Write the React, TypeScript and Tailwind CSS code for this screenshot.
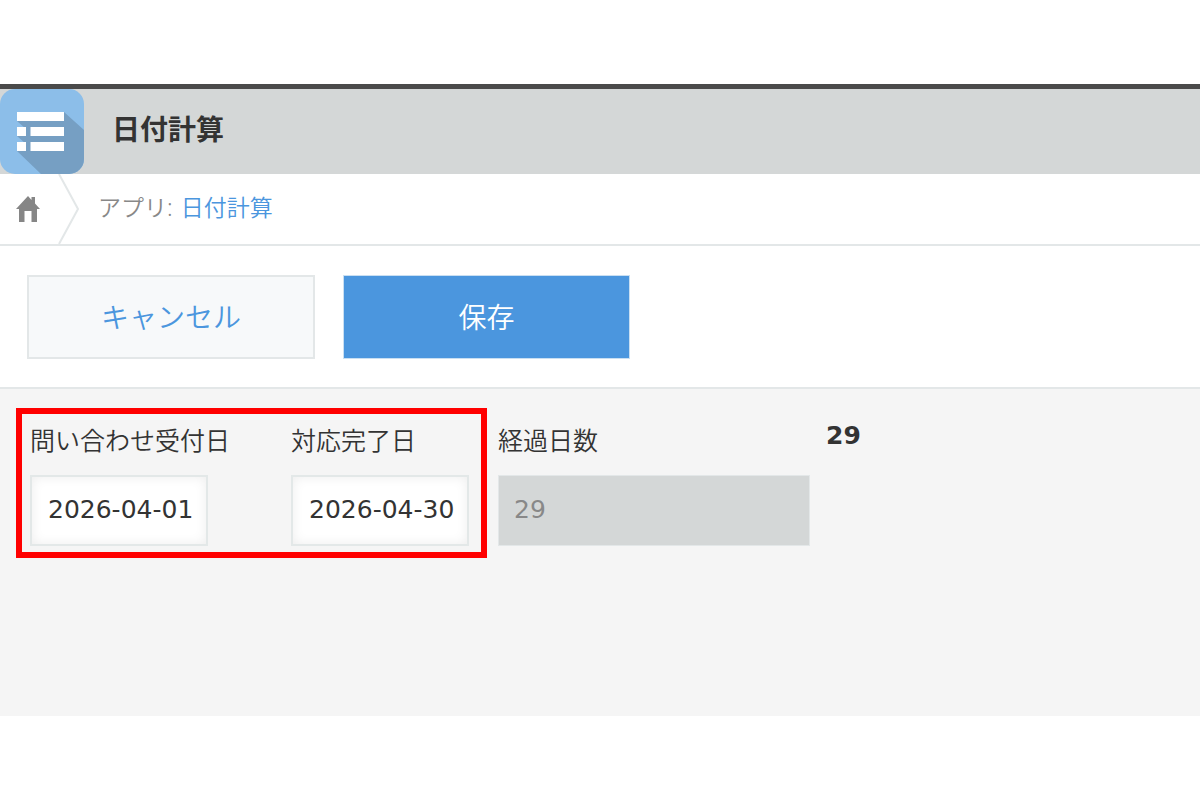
import React from "react";

function AppIcon() {
    return (
        <svg className="h-[85px] w-[84px] shrink-0" viewBox="0 0 84 85" aria-hidden="true">
            <defs>
                <clipPath id="tile">
                    <rect width="84" height="85" rx="15" />
                </clipPath>
            </defs>
            <g clipPath="url(#tile)">
                <rect width="84" height="85" fill="#8cbee9" />
                {/* long shadow behind the list rows */}
                <path d="M64 23 L84 41 V85 H41 L17 62 H26 V55 L17 47 H26 V40 L17 32 H64 Z" fill="#769fc3" />
            </g>
            <g fill="#fff">
                <rect x="17" y="23" width="47" height="9" />
                <rect x="17" y="38" width="9" height="9" />
                <rect x="30.5" y="38" width="33.5" height="9" />
                <rect x="17" y="53" width="9" height="9" />
                <rect x="30.5" y="53" width="33.5" height="9" />
            </g>
        </svg>
    );
}

function HomeIcon() {
    return (
        <svg className="h-[26px] w-6" viewBox="0 0 24 26" fill="#868686" aria-hidden="true">
            <path d="M12 0 L15.5 4 V1 H19 V7.5 L24 13 H21 V26 H15.5 V15 H8.5 V26 H3 V13 H0 Z" />
        </svg>
    );
}

type DateFieldProps = { id: string; label: string; value: string };

function DateField({ id, label, value }: DateFieldProps) {
    const [date, setDate] = React.useState(value);

    return (
        <div className="flex flex-col gap-[19px]">
            <label htmlFor={id} className="text-[25px] leading-8 whitespace-nowrap">{label}</label>
            <input
                id={id}
                type="text"
                value={date}
                onChange={(e) => setDate(e.target.value)}
                className="h-[71px] w-[178px] border-2 border-[#e3e8e8] bg-white pr-1 pb-0.5 pl-4 font-['DejaVu_Sans',sans-serif] text-[25px] font-normal shadow-[inset_0_0_12px_#ededed] outline-none"
            />
        </div>
    );
}

export default function App() {
    return (
        <div className="bg-white py-[84px] font-['Noto_Sans','Noto_Sans_CJK_JP',sans-serif] font-[350] text-[#333]">
            <header className="flex items-center gap-7 border-t-[5px] border-[#4a4a4a] bg-[#d4d7d7]">
                <AppIcon />
                <h1 className="pb-1.5 text-[28px] leading-10 font-bold">日付計算</h1>
            </header>

            <nav className="flex h-[72px] border-b-2 border-[#e3e7e8]" aria-label="breadcrumb">
                <a href="#" aria-label="ホーム" className="flex items-center pl-4">
                    <HomeIcon />
                </a>
                <svg className="ml-[18px] h-[70px] w-[22px]" viewBox="0 0 22 70" fill="none" aria-hidden="true">
                    <path d="M1 0 L20 35 L1 70" stroke="#e3e7e8" strokeWidth="2" />
                </svg>
                <p className="flex items-center gap-2 pb-1 pl-[18px] text-[23px] text-[#888]">
                    <span>アプリ:</span>
                    <a href="#" className="text-[#4b96de]">日付計算</a>
                </p>
            </nav>

            <div className="flex gap-7 border-b-2 border-[#e3e7e8] px-[27px] pt-[29px] pb-7 text-[28px]">
                <button type="button" className="h-[84px] w-72 border-2 border-[#e3e7e8] bg-[#f7f9fa] text-[#4b96de]">
                    キャンセル
                </button>
                <button type="button" className="h-[84px] w-[287px] border border-[#c9dff2] bg-[#4b96de] text-white">
                    保存
                </button>
            </div>

            <main className="flex min-h-[327px] items-start bg-[#f5f5f5] pt-[19px] pl-4">
                <div className="flex gap-[61px] border-6 border-[#ff0000] pt-2.5 pr-3 pb-1.5 pl-2">
                    <DateField id="received" label="問い合わせ受付日" value="2026-04-01" />
                    <DateField id="completed" label="対応完了日" value="2026-04-30" />
                </div>
                <div className="ml-[11px] flex flex-col gap-[19px] pt-4">
                    <label htmlFor="elapsed" className="text-[25px] leading-8">経過日数</label>
                    <input
                        id="elapsed"
                        type="text"
                        value="29"
                        disabled
                        className="h-[71px] w-[312px] border border-[#e3e7e8] bg-[#d4d7d7] px-[15px] pb-0.5 font-['DejaVu_Sans',sans-serif] text-[25px] font-normal text-[#888]"
                    />
                </div>
                <output htmlFor="received completed" className="ml-4 pt-3 font-['DejaVu_Sans',sans-serif] text-[25px] leading-8 font-bold">29</output>
            </main>
        </div>
    );
}
